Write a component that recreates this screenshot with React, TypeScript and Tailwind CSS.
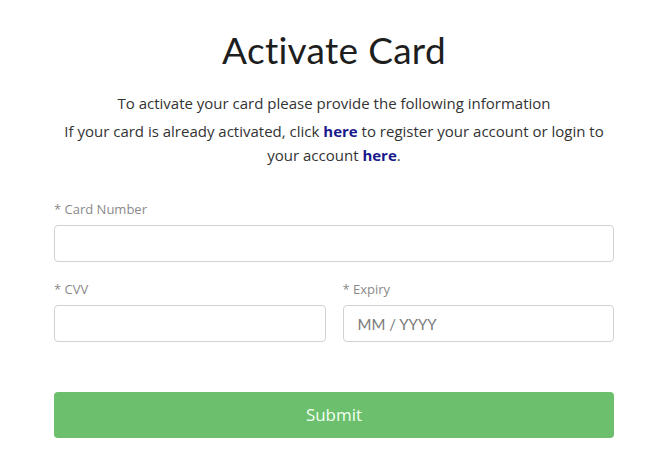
export default function App() {
  return (
    <div className="min-h-[466px] bg-white font-['Open_Sans',sans-serif]">
      <div className="ml-[54px] w-[560px] pt-[28px]">
        <h1 className="text-center text-[37px] leading-[44px] text-[#1e1e1e] font-['Lato',sans-serif] tracking-[0.3px]">
          Activate Card
        </h1>
        <div className="mt-[19px] text-center text-[15px] leading-[24px] text-[#333]">
          <p className="mt-0">To activate your card please provide the following information</p>
          <p className="mt-[4px]">
            If your card is already activated, click{" "}
            <a className="font-bold text-[#1a1a8c]">here</a> to register your account or login to your account{" "}
            <a className="font-bold text-[#1a1a8c]">here</a>.
          </p>
        </div>

        <form className="mt-[33px]">
          <label className="block text-[13px] leading-[18px] text-[#8a8a8a]">* Card Number</label>
          <input className="mt-[7px] block h-[37px] w-full rounded-[4px] border border-[#d2d2d2] px-[14px] text-[15px] outline-none" />

          <div className="mt-[18px] flex gap-[17px]">
            <div className="flex-1">
              <label className="block text-[13px] leading-[18px] text-[#8a8a8a]">* CVV</label>
              <input className="mt-[7px] block h-[37px] w-full rounded-[4px] border border-[#d2d2d2] px-[14px] text-[15px] outline-none" />
            </div>
            <div className="flex-1">
              <label className="block text-[13px] leading-[18px] text-[#8a8a8a]">* Expiry</label>
              <input
                placeholder="MM / YYYY"
                className="mt-[7px] block h-[37px] w-full rounded-[4px] border border-[#d2d2d2] px-[14px] text-[15px] font-['Lato',sans-serif] outline-none placeholder:text-[#7a7a7a]"
              />
            </div>
          </div>

          <button
            type="button"
            className="mt-[50px] block h-[46px] w-full rounded-[4px] bg-[#6cbf6c] text-[17px] text-[#f2fff2]"
          >
            Submit
          </button>
        </form>
      </div>
    </div>
  );
}
